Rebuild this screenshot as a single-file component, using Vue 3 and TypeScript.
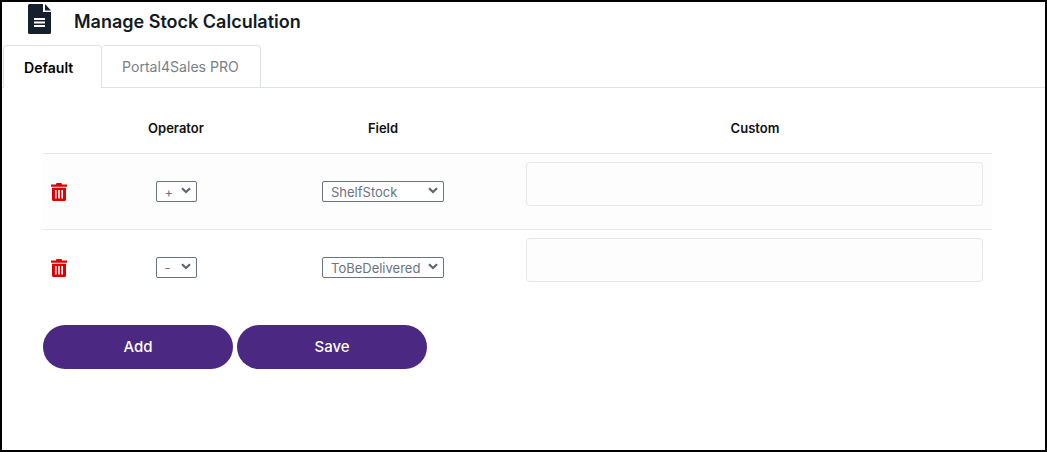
<script setup lang="ts">
interface Row { op: string; field: string; shade: boolean }
const rows: Row[] = [
  { op: '+', field: 'ShelfStock', shade: true },
  { op: '-', field: 'ToBeDelivered', shade: false },
]
const fields: string[] = ['ShelfStock', 'ToBeDelivered']
const ops: string[] = ['+', '-']
</script>

<template>
  <div class="frame">
    <header class="head">
      <svg class="doc" viewBox="0 0 23 30" width="23" height="30" aria-hidden="true">
        <path fill="#16202c" d="M1.500 0H15v8h8V28.500a1.500 1.500 0 0 1-1.500 1.500H1.500A1.500 1.500 0 0 1 0 28.500V1.500A1.500 1.500 0 0 1 1.500 0Z" />
        <path fill="#16202c" d="M17 0l6 6.500h-6Z" />
        <path fill="#fff" d="M6 14h11v2H6Zm0 3.500h11v2H6Zm0 3.500h11v2H6Z" />
      </svg>
      <h1>Manage Stock Calculation</h1>
    </header>
    <nav class="tabs">
      <div class="tab active">Default</div>
      <div class="tab second">Portal4Sales PRO</div>
    </nav>
    <section class="content">
      <div class="grid header">
        <div></div>
        <div>Operator</div>
        <div>Field</div>
        <div>Custom</div>
      </div>
      <div v-for="r in rows" :key="r.field" class="grid row" :class="{ shade: r.shade }">
        <div class="trash">
          <svg viewBox="0 0 16 18" width="16" height="18" aria-hidden="true">
            <path fill="#e00000" fill-rule="evenodd" d="M5.500 0h5l.6 1.500H16v2.200H0V1.500h4.900ZM1 4.800h14v11.700a1.500 1.500 0 0 1-1.500 1.500h-11A1.500 1.500 0 0 1 1 16.500ZM4 7v8.500h1.600V7Zm3.200 0v8.500h1.600V7Zm3.200 0v8.500H12V7Z" />
          </svg>
        </div>
        <div class="cell"><select class="sel op"><option v-for="o in ops" :key="o" :selected="o === r.op">{{ o }}</option></select></div>
        <div class="cell"><select class="sel field"><option v-for="f in fields" :key="f" :selected="f === r.field">{{ f }}</option></select></div>
        <div class="custom"><input class="text" type="text" /></div>
      </div>
      <div class="actions">
        <button type="button" class="btn">Add</button>
        <button type="button" class="btn">Save</button>
      </div>
    </section>
  </div>
</template>

<style>
html, body { margin: 0; padding: 0; background: #fff; }
</style>

<style scoped>
.frame {
  width: 1047px;
  height: 452px;
  box-sizing: border-box;
  border: 2px solid #000;
  background: #fff;
  font-family: Inter, "Liberation Sans", sans-serif;
  overflow: hidden;
}
.head {
  display: flex;
  align-items: center;
  height: 43px;
  padding: 0 0 0 26px;
  box-sizing: border-box;
}
.doc { margin-top: -9px; }
.head h1 {
  margin: 0 0 5px 23px;
  font-size: 18px;
  font-weight: 600;
  color: #111a26;
}
.tabs {
  display: flex;
  height: 42px;
  padding-left: 1px;
  border-bottom: 1px solid #dee2e6;
}
.tab {
  box-sizing: border-box;
  height: 42px;
  padding: 0 20px;
  display: flex;
  align-items: center;
  font-size: 14.100px;
  color: #7a7f87;
  border: 1px solid #dee2e6;
  border-bottom: 0;
  border-radius: 4px 4px 0 0;
}
.tab.active {
  width: 99px;
  height: 43px;
  color: #000;
  font-weight: 600;
  background: #fff;
  position: relative;
  z-index: 1;
}
.tab.second {
  width: 159px;
  border-left: 0;
}
.content { padding: 0 0 0 41px; }
.grid {
  display: grid;
  grid-template-columns: 61px 144px 270px 474px;
  width: 949px;
  text-align: center;
}
.header {
  height: 66px;
  box-sizing: border-box;
  padding-top: 14px;
  align-items: center;
  font-size: 13px;
  font-weight: 600;
  color: #111;
  border-bottom: 1px solid #e5e7eb;
}
.row {
  height: 76px;
  box-sizing: border-box;
  border-bottom: 1px solid #e5e7eb;
}
.row:nth-of-type(3) { border-bottom: 0; height: 75px; }
.row.shade { background: #fdfdfd; }
.trash {
  display: flex;
  align-items: center;
  padding-left: 8px;
}
.cell {
  display: flex;
  align-items: center;
  justify-content: center;
}
.sel {
  appearance: none;
  -webkit-appearance: none;
  font-family: Inter, "Liberation Sans", sans-serif;
  font-size: 13px;
  height: 21px;
  color: #6b7280;
  background-color: #fff;
  background-image: url("data:image/svg+xml,%3Csvg xmlns='http://www.w3.org/2000/svg' width='10' height='7' viewBox='0 0 10 7'%3E%3Cpath d='M1 1.200l4 3.800 4-3.800' fill='none' stroke='%235f6672' stroke-width='2.200'/%3E%3C/svg%3E");
  background-repeat: no-repeat;
  background-position: right 5px top 5px;
  border: 1px solid #6b7280;
  border-radius: 2px;
  box-sizing: border-box;
  padding: 0 0 0 8px;
}
.sel.op { width: 41px; }
.sel.field { width: 122px; }
.custom { padding: 8px 9px 0 8px; }
.text {
  display: block;
  box-sizing: border-box;
  width: 100%;
  height: 44px;
  background: #fdfdfd;
  border: 1px solid #e5e7eb;
  border-radius: 4px;
}
.actions {
  display: flex;
  gap: 4px;
  margin-top: 20px;
}
.btn {
  width: 190px;
  height: 44px;
  border: 0;
  border-radius: 22px;
  background: #4b2882;
  color: #fff;
  font-family: Inter, "Liberation Sans", sans-serif;
  font-size: 15px;
  font-weight: 500;
  padding: 0 0 2px;
}
</style>
